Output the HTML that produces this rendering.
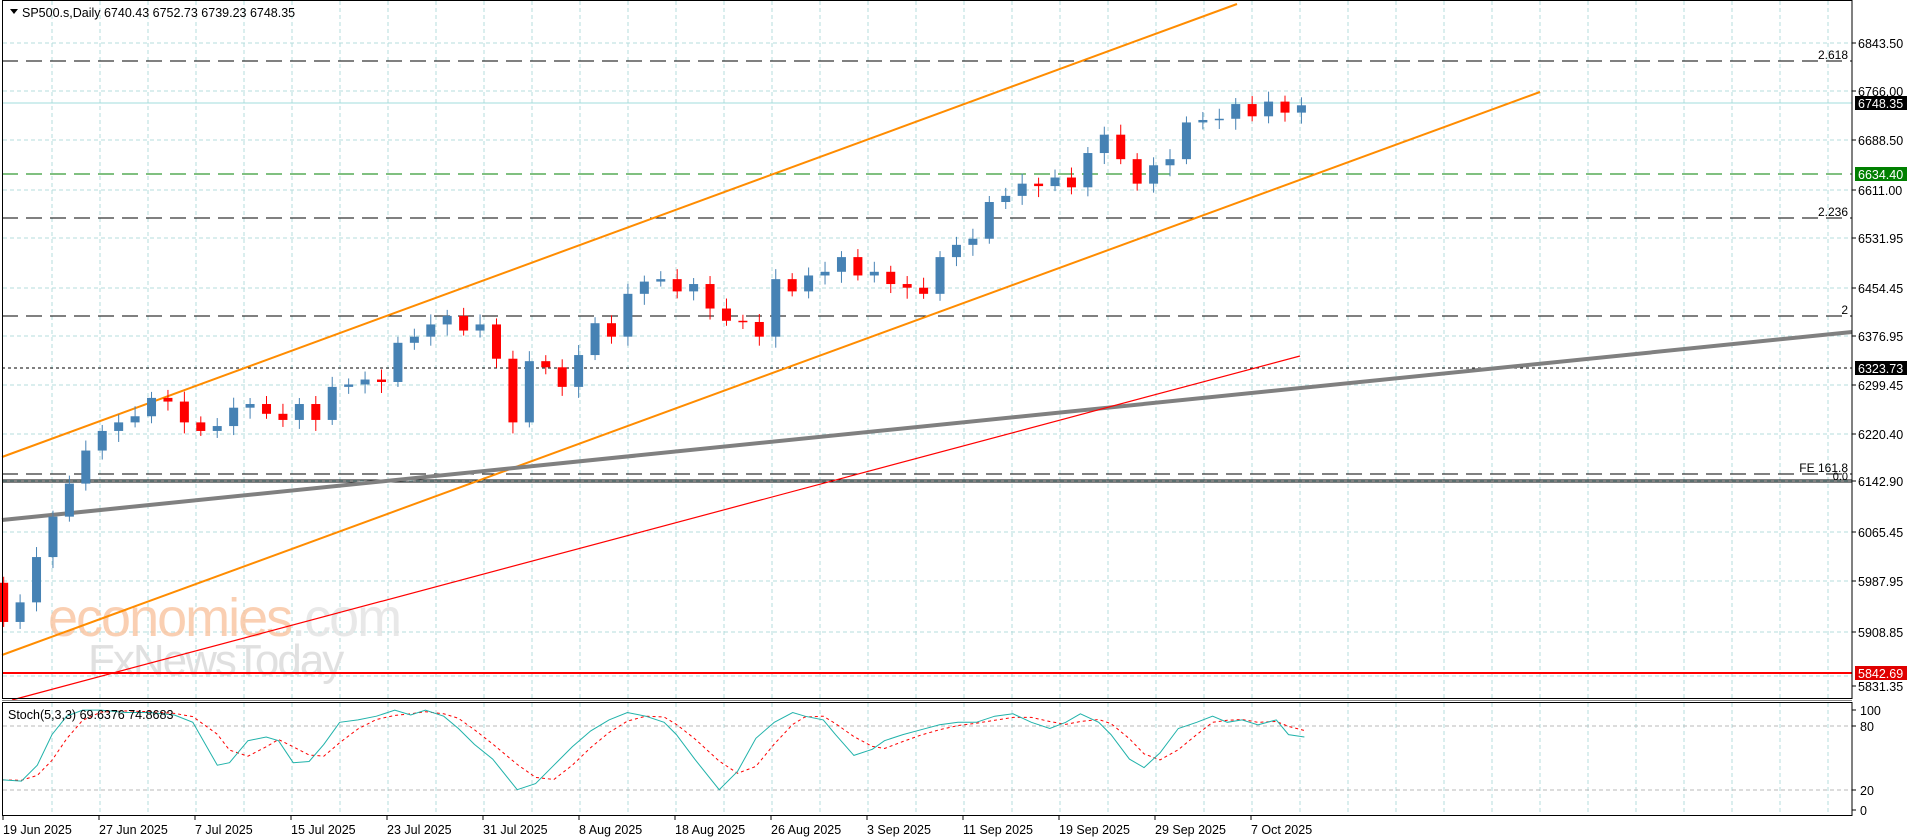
<!DOCTYPE html>
<html><head><meta charset="utf-8"><style>
html,body{margin:0;padding:0;background:#fff;width:1916px;height:840px;overflow:hidden}
svg{display:block;font-family:"Liberation Sans","DejaVu Sans",sans-serif}
</style></head><body>
<svg id="s" width="1916" height="840" xmlns="http://www.w3.org/2000/svg">
<rect width="1916" height="840" fill="#fff"/>
<g id="grid"></g>
<text x="48" y="636" font-size="54" fill="#f9c4a0" opacity="0.8" letter-spacing="-2">economies<tspan fill="#e3e3e3">.com</tspan></text>
<text x="88" y="675" font-size="44" fill="#e0e0e0" letter-spacing="-2">FxNewsToday</text>
<line x1="2" y1="61" x2="1852" y2="61" stroke="#000" stroke-dasharray="16,8"/>
<line x1="2" y1="218" x2="1852" y2="218" stroke="#000" stroke-dasharray="16,8"/>
<line x1="2" y1="316" x2="1852" y2="316" stroke="#000" stroke-dasharray="16,8"/>
<line x1="2" y1="474" x2="1852" y2="474" stroke="#000" stroke-dasharray="16,8"/>
<line x1="2" y1="480" x2="1852" y2="480" stroke="#000"/>
<line x1="2" y1="482" x2="1852" y2="482" stroke="#000"/>
<line x1="2" y1="368" x2="1852" y2="368" stroke="#000" stroke-dasharray="3,3"/>
<line x1="2" y1="103" x2="1852" y2="103" stroke="#a0dcdc"/>
<line x1="2" y1="174" x2="1852" y2="174" stroke="#008000" stroke-dasharray="16,8"/>
<line x1="2" y1="673" x2="1852" y2="673" stroke="#ff0000" stroke-width="2"/>
<text x="1848" y="59" font-size="12" text-anchor="end">2.618</text>
<text x="1848" y="216" font-size="12" text-anchor="end">2.236</text>
<text x="1848" y="314" font-size="12" text-anchor="end">2</text>
<text x="1848" y="472" font-size="12" text-anchor="end">FE 161.8</text>
<text x="1848" y="480" font-size="11" text-anchor="end">0.0</text>
<line x1="2" y1="457" x2="1237" y2="4" stroke="#ff8c00" stroke-width="2"/>
<line x1="2" y1="655" x2="1540" y2="92" stroke="#ff8c00" stroke-width="2"/>
<line x1="2" y1="520" x2="1852" y2="332" stroke="#808080" stroke-width="4"/>
<line x1="12" y1="700" x2="1300" y2="356" stroke="#ff0000" stroke-width="1.2"/>
<g id="candles"></g>
<g id="stoch"></g>
<rect x="2.5" y="0.5" width="1849.5" height="698" fill="none" stroke="#000"/>
<rect x="2.5" y="702.5" width="1849.5" height="113" fill="none" stroke="#000"/>
<line x1="2" y1="700.5" x2="1852" y2="700.5" stroke="#888" stroke-width="1"/>
<path d="M10 9 L18 9 L14 14 Z" fill="#000"/>
<text x="22" y="17" font-size="12.5">SP500.s,Daily  6740.43 6752.73 6739.23 6748.35</text>
<text x="8" y="719" font-size="12.5">Stoch(5,3,3) 69.6376 74.8683</text>
<g id="axis" font-size="12.5"></g>
</svg>
<script>
var NS="http://www.w3.org/2000/svg";
function el(p,t,a,txt){var e=document.createElementNS(NS,t);for(var k in a)e.setAttribute(k,a[k]);if(txt!=null)e.textContent=txt;document.getElementById(p).appendChild(e);return e;}
for(var x=52;x<1852;x+=48){el('grid','line',{x1:x,y1:1,x2:x,y2:698,stroke:'#b4dcdc','stroke-dasharray':'4,3'});el('grid','line',{x1:x,y1:703,x2:x,y2:815,stroke:'#b4dcdc','stroke-dasharray':'4,3'});}
var hy=[43,91,140,190,238,288,336,385,434,481,532,581,632,676];
hy.forEach(function(y){el('grid','line',{x1:3,y1:y,x2:1852,y2:y,stroke:'#b4dcdc','stroke-dasharray':'4,3'});});
[726,790].forEach(function(y){el('grid','line',{x1:3,y1:y,x2:1852,y2:y,stroke:'#b8b8b8','stroke-dasharray':'4,3'});});
var lab=[[43,'6843.50'],[91,'6766.00'],[140,'6688.50'],[190,'6611.00'],[238,'6531.95'],[288,'6454.45'],[336,'6376.95'],[385,'6299.45'],[434,'6220.40'],[481,'6142.90'],[532,'6065.45'],[581,'5987.95'],[632,'5908.85'],[686,'5831.35']];
lab.forEach(function(l){el('axis','line',{x1:1852,y1:l[0],x2:1856,y2:l[0],stroke:'#000'});el('axis','text',{x:1858,y:l[0]+5},l[1]);});
function box(y,t,c){el('axis','rect',{x:1855,y:y-7,width:52,height:14,fill:c});el('axis','text',{x:1858,y:y+5,fill:'#fff'},t);}
box(103,'6748.35','#000');box(174,'6634.40','#008000');box(368,'6323.73','#000');box(673,'5842.69','#e00000');
[[710,'100'],[726,'80'],[790,'20'],[810,'0']].forEach(function(l){el('axis','line',{x1:1852,y1:l[0],x2:1856,y2:l[0],stroke:'#000'});el('axis','text',{x:1860,y:l[0]+5},l[1]);});
var dates=['19 Jun 2025','27 Jun 2025','7 Jul 2025','15 Jul 2025','23 Jul 2025','31 Jul 2025','8 Aug 2025','18 Aug 2025','26 Aug 2025','3 Sep 2025','11 Sep 2025','19 Sep 2025','29 Sep 2025','7 Oct 2025'];
dates.forEach(function(d,i){var x=3+96*i;el('axis','line',{x1:x,y1:816,x2:x,y2:820,stroke:'#000'});el('axis','text',{x:x,y:834},d);});
var S=1.2243;
var c=[508,492,455,422,395,368,352,345,340,325,328,345,352,348,333,330,338,343,330,343,316,314,310,312,280,275,265,258,270,265,293,345,295,300,316,290,264,275,240,230,228,238,232,252,262,263,275,228,238,225,222,210,225,222,232,235,240,210,200,195,165,160,150,152,145,153,125,110,130,150,135,130,100,98,97,85,95,83,92,86];
var o=[476];for(var i=1;i<c.length;i++)o.push(c[i-1]);
var sp=(1063-3)/(c.length-1);
for(var i=0;i<c.length;i++){
 var x=(3+sp*i)*S, op=o[i]*S, cl=c[i]*S, up=cl<op;
 var t=Math.min(op,cl),b=Math.max(op,cl);
 var col=up?'#4682b4':'#ff0000';
 el('candles','line',{x1:x,y1:t-6-(i%3)*2,x2:x,y2:b+5+(i%4)*2,stroke:col});
 el('candles','rect',{x:x-4.5,y:t,width:9,height:Math.max(b-t,1.5),fill:col});
}
var p=[0,637,15,638,28,625,40,600,52,585,65,580,80,580,100,582,120,582,140,584,155,590,175,625,185,623,200,605,215,602,225,605,237,623,250,622,262,608,275,590,290,588,305,585,320,580,333,584,345,580,360,585,372,595,385,608,400,620,420,645,435,640,450,625,465,610,480,597,495,588,510,582,525,585,540,590,550,600,565,620,585,645,600,630,615,603,630,590,645,582,655,585,670,588,680,600,695,617,710,612,720,605,735,600,750,596,765,592,780,590,795,590,810,585,825,583,840,590,855,595,868,590,880,583,895,590,905,600,920,620,932,627,945,615,960,595,975,590,988,585,1000,590,1012,588,1025,592,1040,588,1050,600,1063,602];
var a='',b2='';var pts=[];for(var i=0;i<p.length;i+=2)pts.push([p[i]*S+3,p[i+1]*S]);
pts.forEach(function(q,i){a+=(i?'L':'M')+q[0].toFixed(1)+' '+q[1].toFixed(1);});
pts.forEach(function(q,i){var j=Math.max(0,i-1),k=Math.max(0,i-2);var y=(pts[i][1]+pts[j][1]+pts[k][1])/3;b2+=(i?'L':'M')+q[0].toFixed(1)+' '+y.toFixed(1);});
el('stoch','path',{d:b2,fill:'none',stroke:'#ff0000','stroke-dasharray':'3,3'});
el('stoch','path',{d:a,fill:'none',stroke:'#20b2aa'});
</script>
</body></html>
